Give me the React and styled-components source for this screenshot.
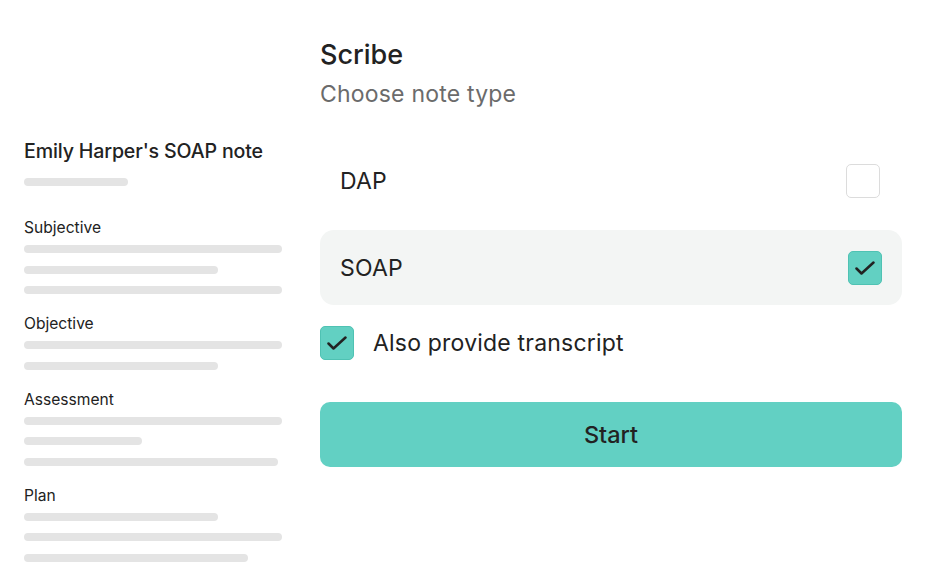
import React from 'react'
import styled, { createGlobalStyle } from 'styled-components'

const Global = createGlobalStyle`
  html, body { margin: 0; padding: 0; background: #ffffff; }
  body { font-family: Inter, "Noto Sans", "Liberation Sans", sans-serif; color: #222; }
`

const Page = styled.div`
  display: flex;
  align-items: flex-start;
  gap: 38px;
  padding-left: 24px;
  width: 942px;
  height: 587px;
  box-sizing: border-box;
  overflow: hidden;
`

const Note = styled.div`
  width: 258px;
  padding-top: 139px;
  display: flex;
  flex-direction: column;
`

const NoteTitle = styled.div`
  font-size: 19.6px;
  font-weight: 500;
  line-height: 24px;
  letter-spacing: -0.15px;
  white-space: nowrap;
`

const Bar = styled.div`
  height: 8px;
  border-radius: 4px;
  background: #e4e4e4;
  width: ${p => p.w}px;
`

const TitleBar = styled(Bar)`
  margin-top: 15px;
  margin-bottom: 32px;
`

const Section = styled.div`
  display: flex;
  flex-direction: column;
  gap: 12.5px;
  margin-bottom: 20px;
`

const SectionLabel = styled.div`
  font-size: 15.6px;
  line-height: 20px;
  margin-bottom: -5.5px;
`

const Panel = styled.div`
  width: 582px;
  padding-top: 39px;
  display: flex;
  flex-direction: column;
`

const Title = styled.div`
  font-size: 27px;
  font-weight: 500;
  line-height: 32px;
`

const Subtitle = styled.div`
  font-size: 23px;
  letter-spacing: 0.2px;
  line-height: 30px;
  color: #6b6b6b;
  margin-top: 8px;
  margin-bottom: 34px;
`

const Options = styled.div`
  display: flex;
  flex-direction: column;
  gap: 12px;
`

const Option = styled.div`
  height: 75px;
  display: flex;
  align-items: center;
  justify-content: space-between;
  padding: 0 ${p => (p.active ? 20 : 22)}px 0 20px;
  border-radius: 14px;
  background: ${p => (p.active ? '#f3f5f4' : 'transparent')};
  font-size: 23px;
  letter-spacing: 0.2px;
`

const Box = styled.div`
  width: 34px;
  height: 34px;
  box-sizing: border-box;
  border-radius: 5px;
  border: 1.5px solid ${p => (p.checked ? '#4fc2b3' : '#dcdcdc')};
  background: ${p => (p.checked ? '#62d0c2' : '#fff')};
  display: flex;
  align-items: center;
  justify-content: center;
`

const Transcript = styled.label`
  display: flex;
  align-items: center;
  gap: 19px;
  margin-top: 21px;
  font-size: 23px;
  letter-spacing: 0.2px;
`

const StartButton = styled.button`
  margin-top: 42px;
  height: 65px;
  border: none;
  border-radius: 10px;
  background: #62d0c3;
  color: #222;
  font-family: inherit;
  font-size: 23.5px;
  font-weight: 500;
`

const Check = () => (
  <svg width="20" height="20" viewBox="0 0 20 20" fill="none">
    <polyline points="1.5,10.5 6.5,15.5 18.5,4.5" stroke="#222" strokeWidth="2.5" strokeLinecap="round" strokeLinejoin="round" />
  </svg>
)

const CheckBox = ({ checked }) => <Box checked={checked}>{checked && <Check />}</Box>

const sections = [
  { label: 'Subjective', lines: [258, 194, 258] },
  { label: 'Objective', lines: [258, 194] },
  { label: 'Assessment', lines: [258, 118, 254] },
  { label: 'Plan', lines: [194, 258, 224] },
]

export default function App() {
  return (
    <>
      <Global />
      <Page>
        <Note>
          <NoteTitle>Emily Harper's SOAP note</NoteTitle>
          <TitleBar w={104} />
          {sections.map(s => (
            <Section key={s.label}>
              <SectionLabel>{s.label}</SectionLabel>
              {s.lines.map((w, i) => (
                <Bar key={i} w={w} />
              ))}
            </Section>
          ))}
        </Note>
        <Panel>
          <Title>Scribe</Title>
          <Subtitle>Choose note type</Subtitle>
          <Options>
            <Option>
              DAP
              <CheckBox />
            </Option>
            <Option active>
              SOAP
              <CheckBox checked />
            </Option>
          </Options>
          <Transcript>
            <CheckBox checked />
            Also provide transcript
          </Transcript>
          <StartButton>Start</StartButton>
        </Panel>
      </Page>
    </>
  )
}
